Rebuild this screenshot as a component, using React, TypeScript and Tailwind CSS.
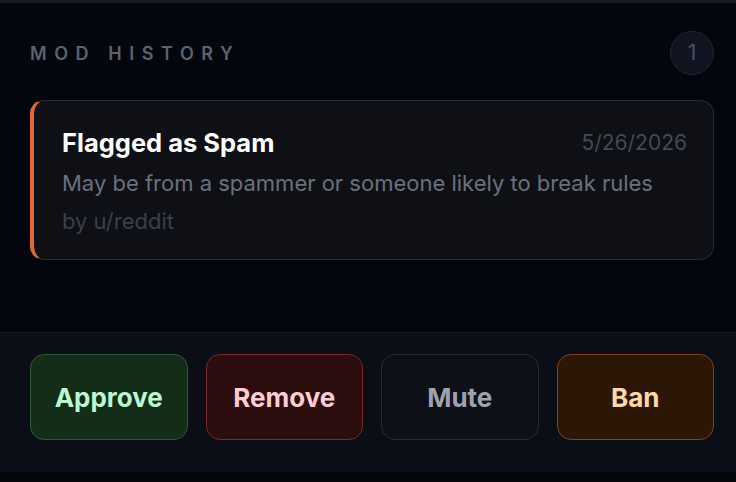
import React from 'react';

type Action = {
  label: string;
  className: string;
};

const actions: Action[] = [
  { label: 'Approve', className: 'bg-[#132d19] border-[#2c5a35] text-[#bbf7d0]' },
  { label: 'Remove', className: 'bg-[#2c0d0e] border-[#7a2828] text-[#fecdd3]' },
  { label: 'Mute', className: 'bg-[#0d1016] border-[#252a35] text-[#9ca3af]' },
  { label: 'Ban', className: 'bg-[#2c1606] border-[#85401e] text-[#fed7aa]' },
];

export default function App() {
  return (
    <div
      className="w-[736px] h-[482px] flex flex-col bg-[#04060e] overflow-hidden"
      style={{ fontFamily: 'Inter, "Noto Sans", sans-serif' }}
    >
      {/* top edge of the panel */}
      <div className="h-[3px] bg-[#161b27]" />

      <div className="flex-1 flex flex-col pl-[30px] pr-[22px]">
        {/* Header */}
        <div className="flex items-center justify-between mt-[28px] h-[44px]">
          <span className="text-[18px] font-semibold tracking-[0.42em] text-[#5c6270]">
            MOD HISTORY
          </span>
          <span className="w-[44px] h-[44px] rounded-full bg-[#0f1420] border border-[#1f2533] flex items-center justify-center text-[21px] text-[#4a5060]">
            1
          </span>
        </div>

        {/* History entry */}
        <div className="mt-[25px] h-[160px] rounded-[14px] border border-[#262b36] border-l-[4px] border-l-[#e0692b] bg-[#0e1016] pl-[28px] pr-[26px] pt-[24px]">
          <div className="flex items-center justify-between h-[36px]">
            <span className="text-[25.5px] font-bold text-white">Flagged as Spam</span>
            <span className="text-[21px] text-[#434955]">5/26/2026</span>
          </div>
          <p className="mt-[7px] text-[22px] text-[#6a707c] leading-[30px]">
            May be from a spammer or someone likely to break rules
          </p>
          <p className="mt-[8px] text-[22px] text-[#3a3f4a] leading-[30px]">by u/reddit</p>
        </div>
      </div>

      {/* Action bar */}
      <div className="h-[140px] bg-[#0b0e17] border-t border-[#161b26] pl-[30px] pr-[22px] pt-[21px]">
        <div className="grid grid-cols-4 gap-[18px]">
          {actions.map((a) => (
            <button
              key={a.label}
              className={`h-[86px] rounded-[14px] border-[1.5px] text-[26px] font-bold ${a.className}`}
            >
              {a.label}
            </button>
          ))}
        </div>
      </div>
      <div className="h-[10px] bg-[#05070a]" />
    </div>
  );
}
